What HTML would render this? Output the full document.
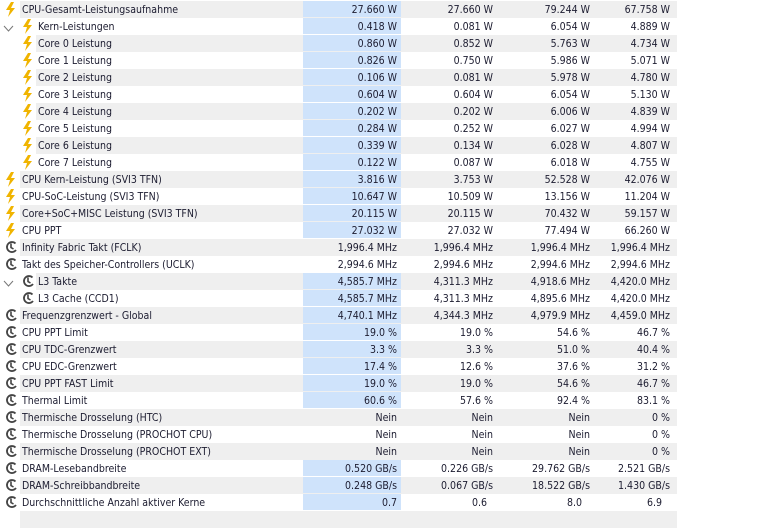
<!DOCTYPE html><html><head><meta charset="utf-8"><style>
body{margin:0;width:771px;height:521px;background:#fff;overflow:hidden;font-family:"DejaVu Sans Condensed","Liberation Sans",sans-serif;font-size:10.5px;color:#1c1c30}
.r{position:absolute;left:0;height:17px;width:677px}
.bg{position:absolute;top:0;height:17px;right:0;background:#efefef}
.bl{position:absolute;left:303px;width:98px;top:0;height:16px;background:#cfe3fb}
.t{position:absolute;top:3px;white-space:nowrap}
.v{position:absolute;top:3px;text-align:right;white-space:nowrap}
.ic{position:absolute;top:1px}
</style></head><body>
<div id="c"></div>
<script>
const rows=[
[0,'b','CPU-Gesamt-Leistungsaufnahme','27.660 W','27.660 W','79.244 W','67.758 W',1],
[1,'b','Kern-Leistungen','0.418 W','0.081 W','6.054 W','4.889 W',1,1],
[2,'b','Core 0 Leistung','0.860 W','0.852 W','5.763 W','4.734 W',1],
[2,'b','Core 1 Leistung','0.826 W','0.750 W','5.986 W','5.071 W',1],
[2,'b','Core 2 Leistung','0.106 W','0.081 W','5.978 W','4.780 W',1],
[2,'b','Core 3 Leistung','0.604 W','0.604 W','6.054 W','5.130 W',1],
[2,'b','Core 4 Leistung','0.202 W','0.202 W','6.006 W','4.839 W',1],
[2,'b','Core 5 Leistung','0.284 W','0.252 W','6.027 W','4.994 W',1],
[2,'b','Core 6 Leistung','0.339 W','0.134 W','6.028 W','4.807 W',1],
[2,'b','Core 7 Leistung','0.122 W','0.087 W','6.018 W','4.755 W',1],
[0,'b','CPU Kern-Leistung (SVI3 TFN)','3.816 W','3.753 W','52.528 W','42.076 W',1],
[0,'b','CPU-SoC-Leistung (SVI3 TFN)','10.647 W','10.509 W','13.156 W','11.204 W',1],
[0,'b','Core+SoC+MISC Leistung (SVI3 TFN)','20.115 W','20.115 W','70.432 W','59.157 W',1],
[0,'b','CPU PPT','27.032 W','27.032 W','77.494 W','66.260 W',1],
[0,'c','Infinity Fabric Takt (FCLK)','1,996.4 MHz','1,996.4 MHz','1,996.4 MHz','1,996.4 MHz',0],
[0,'c','Takt des Speicher-Controllers (UCLK)','2,994.6 MHz','2,994.6 MHz','2,994.6 MHz','2,994.6 MHz',0],
[1,'c','L3 Takte','4,585.7 MHz','4,311.3 MHz','4,918.6 MHz','4,420.0 MHz',1,1],
[2,'c','L3 Cache (CCD1)','4,585.7 MHz','4,311.3 MHz','4,895.6 MHz','4,420.0 MHz',1],
[0,'c','Frequenzgrenzwert - Global','4,740.1 MHz','4,344.3 MHz','4,979.9 MHz','4,459.0 MHz',1],
[0,'c','CPU PPT Limit','19.0 %','19.0 %','54.6 %','46.7 %',1],
[0,'c','CPU TDC-Grenzwert','3.3 %','3.3 %','51.0 %','40.4 %',1],
[0,'c','CPU EDC-Grenzwert','17.4 %','12.6 %','37.6 %','31.2 %',1],
[0,'c','CPU PPT FAST Limit','19.0 %','19.0 %','54.6 %','46.7 %',1],
[0,'c','Thermal Limit','60.6 %','57.6 %','92.4 %','83.1 %',1],
[0,'c','Thermische Drosselung (HTC)','Nein','Nein','Nein','0 %',0],
[0,'c','Thermische Drosselung (PROCHOT CPU)','Nein','Nein','Nein','0 %',0],
[0,'c','Thermische Drosselung (PROCHOT EXT)','Nein','Nein','Nein','0 %',0],
[0,'c','DRAM-Lesebandbreite','0.520 GB/s','0.226 GB/s','29.762 GB/s','2.521 GB/s',1],
[0,'c','DRAM-Schreibbandbreite','0.248 GB/s','0.067 GB/s','18.522 GB/s','1.430 GB/s',1],
[0,'c','Durchschnittliche Anzahl aktiver Kerne','0.7','0.6','8.0','6.9',1],
];
const bolt='<svg width="12" height="15" viewBox="0 0 12 15"><path d="M6 0L1 8h4l-2 7 7-9H6l3-6z" fill="#f0b400"/></svg>';
const clk='<svg width="13" height="14" viewBox="0 0 13 14"><path d="M10.5 3.5A5 5 0 1 0 11 10" fill="none" stroke="#444" stroke-width="1.8"/><path d="M6 3.5V7.5L8.5 9" fill="none" stroke="#444" stroke-width="1.6"/></svg>';
const chev='<svg width="11" height="8" viewBox="0 0 11 8"><path d="M1 1l4.5 5L10 1" fill="none" stroke="#777" stroke-width="1"/></svg>';
const rights=[397,493,590,670];
let h='';
rows.forEach((r,i)=>{
 const tx=r[0]==0?22:38, ix=r[0]==0?5:22;
 h+=`<div class="r" style="top:${i*17+1}px">`;
 if(i%2==0)h+=`<div class="bg" style="left:${tx-2}px"></div>`;
 if(r[7])h+=`<div class="bl"></div>`;
 if(r[8])h+=`<span class="ic" style="left:3px;top:6px">${chev}</span>`;
 h+=`<span class="ic" style="left:${ix}px">${r[1]=='b'?bolt:clk}</span>`;
 h+=`<span class="t" style="left:${tx}px">${r[2]}</span>`;
 for(let k=0;k<4;k++){let rr=rights[k];if(r[2].startsWith('Durch'))rr-=[0,6,8,8][k];h+=`<span class="v" style="right:${677-rr}px">${r[3+k]}</span>`;}
 h+='</div>';
});
h+=`<div class="r" style="top:511px"><div class="bg" style="left:20px"></div></div>`;
document.getElementById('c').innerHTML=h;
</script>
</body></html>
